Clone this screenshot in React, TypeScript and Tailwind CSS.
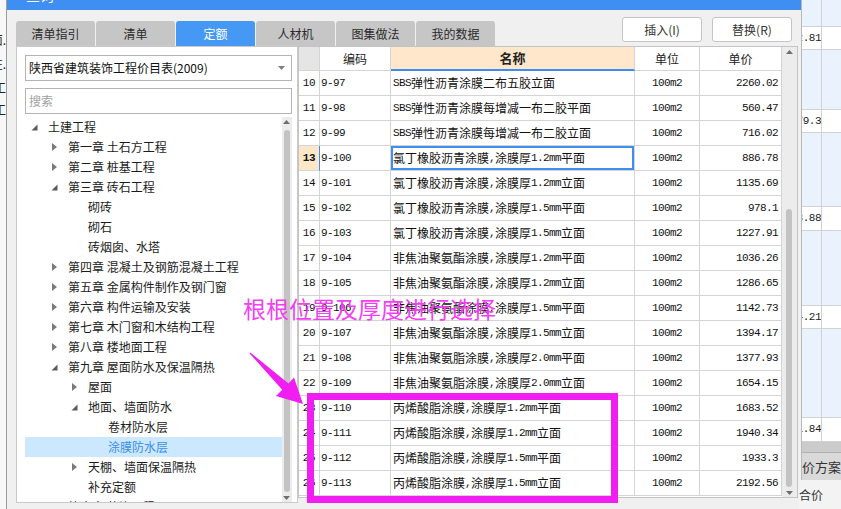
import React from 'react';

const cjk = "font-['Noto_Sans_CJK_SC','Noto_Sans',sans-serif]";
const mono = "font-['Liberation_Mono','Noto_Sans_CJK_SC',monospace]";

const rows = [
  ['10', '9-97', 'SBS弹性沥青涂膜二布五胶立面', '2260.02'],
  ['11', '9-98', 'SBS弹性沥青涂膜每增减一布二胶平面', '560.47'],
  ['12', '9-99', 'SBS弹性沥青涂膜每增减一布二胶立面', '716.02'],
  ['13', '9-100', '氯丁橡胶沥青涂膜,涂膜厚1.2mm平面', '886.78'],
  ['14', '9-101', '氯丁橡胶沥青涂膜,涂膜厚1.2mm立面', '1135.69'],
  ['15', '9-102', '氯丁橡胶沥青涂膜,涂膜厚1.5mm平面', '978.1'],
  ['16', '9-103', '氯丁橡胶沥青涂膜,涂膜厚1.5mm立面', '1227.91'],
  ['17', '9-104', '非焦油聚氨酯涂膜,涂膜厚1.2mm平面', '1036.26'],
  ['18', '9-105', '非焦油聚氨酯涂膜,涂膜厚1.2mm立面', '1286.65'],
  ['19', '9-106', '非焦油聚氨酯涂膜,涂膜厚1.5mm平面', '1142.73'],
  ['20', '9-107', '非焦油聚氨酯涂膜,涂膜厚1.5mm立面', '1394.17'],
  ['21', '9-108', '非焦油聚氨脂涂膜,涂膜厚2.0mm平面', '1377.93'],
  ['22', '9-109', '非焦油聚氨脂涂膜,涂膜厚2.0mm立面', '1654.15'],
  ['23', '9-110', '丙烯酸脂涂膜,涂膜厚1.2mm平面', '1683.52'],
  ['24', '9-111', '丙烯酸脂涂膜,涂膜厚1.2mm立面', '1940.34'],
  ['25', '9-112', '丙烯酸脂涂膜,涂膜厚1.5mm平面', '1933.3'],
  ['26', '9-113', '丙烯酸脂涂膜,涂膜厚1.5mm立面', '2192.56'],
];

type Node = { level: number; icon?: 'open' | 'closed'; text: string; selected?: boolean };

const tree: Node[] = [
  { level: 0, icon: 'open', text: '土建工程' },
  { level: 1, icon: 'closed', text: '第一章 土石方工程' },
  { level: 1, icon: 'closed', text: '第二章 桩基工程' },
  { level: 1, icon: 'open', text: '第三章 砖石工程' },
  { level: 2, text: '砌砖' },
  { level: 2, text: '砌石' },
  { level: 2, text: '砖烟囱、水塔' },
  { level: 1, icon: 'closed', text: '第四章 混凝土及钢筋混凝土工程' },
  { level: 1, icon: 'closed', text: '第五章 金属构件制作及钢门窗' },
  { level: 1, icon: 'closed', text: '第六章 构件运输及安装' },
  { level: 1, icon: 'closed', text: '第七章 木门窗和木结构工程' },
  { level: 1, icon: 'closed', text: '第八章 楼地面工程' },
  { level: 1, icon: 'open', text: '第九章 屋面防水及保温隔热' },
  { level: 2, icon: 'closed', text: '屋面' },
  { level: 2, icon: 'open', text: '地面、墙面防水' },
  { level: 3, text: '卷材防水层' },
  { level: 3, text: '涂膜防水层', selected: true },
  { level: 2, icon: 'closed', text: '天棚、墙面保温隔热' },
  { level: 2, text: '补充定额' },
  { level: 1, icon: 'closed', text: '第十章 装饰工程' },
];

const pad = ['pl-[6px]', 'pl-[26px]', 'pl-[46px]', 'pl-[66px]'];

const tabs = ['清单指引', '清单', '定额', '人材机', '图集做法', '我的数据'];

// ascii runs get the narrow mono face, the rest stays CJK
function Mixed({ text }: { text: string }) {
  const parts = text.split(/([\x20-\x7e]+)/).filter(Boolean);
  return (
    <>
      {parts.map((p, i) =>
        /^[\x20-\x7e]+$/.test(p) ? (
          <span key={i} className={`${mono} text-[11px] tracking-[-0.6px]`}>{p}</span>
        ) : (
          <span key={i}>{p}</span>
        )
      )}
    </>
  );
}

function TreeIcon({ kind }: { kind?: 'open' | 'closed' }) {
  if (kind === 'open') {
    return (
      <svg width="7" height="7" viewBox="0 0 7 7">
        <polygon points="6.5,0.5 6.5,6.5 0.5,6.5" fill="#5a5a5a" />
      </svg>
    );
  }
  if (kind === 'closed') {
    return (
      <svg width="5" height="8" viewBox="0 0 5 8" className="ml-[1px]">
        <polygon points="0,0 5,4 0,8" fill="#7a7a7a" />
      </svg>
    );
  }
  return null;
}

function Scrollbar({ thumbTop, thumbBottom, wide }: { thumbTop: string; thumbBottom: string; wide?: boolean }) {
  return (
    <div className={`${wide ? 'w-[15px]' : 'w-[10px]'} h-full bg-[#ececec] flex flex-col items-center`}>
      <svg width="7" height="4" viewBox="0 0 7 4" className="mt-[3px] shrink-0">
        <polygon points="0,4 3.5,0 7,4" fill="#6e6e6e" />
      </svg>
      <div className={`${thumbTop} w-[6px] flex-1 ${thumbBottom} rounded-[3px] bg-[#c3c3c3]`} />
      <svg width="7" height="4" viewBox="0 0 7 4" className="mb-[2px] shrink-0">
        <polygon points="0,0 3.5,4 7,0" fill="#6e6e6e" />
      </svg>
    </div>
  );
}

function BgCell({ h, white, value }: { h: string; white?: boolean; value?: string }) {
  return (
    <div className={`${h} flex border-b border-[#d2d2d2] ${white ? 'bg-white' : 'bg-[#eaf2fd]'}`}>
      <div className={`w-[20px] border-r border-[#d2d2d2] overflow-hidden flex justify-end items-center whitespace-nowrap ${mono} text-[11px] tracking-[-0.5px] text-[#222]`}>
        {value}
      </div>
      <div className="flex-1" />
    </div>
  );
}

export default function App() {
  return (
    <div className={`relative w-[841px] h-[509px] overflow-hidden flex bg-white ${cjk}`}>
      {/* background app, left edge */}
      <div className="w-[6px] h-full bg-[#f7f7f7] overflow-hidden flex flex-col text-[12px] text-[#222] leading-none">
        <div className="mt-[34px] h-[24px] flex justify-end whitespace-nowrap">立面.</div>
        <div className="h-[24px] flex justify-end whitespace-nowrap">立柱.</div>
        <div className="h-[22px] flex justify-end whitespace-nowrap">施工</div>
        <div className="h-[22px] flex justify-end whitespace-nowrap">施工</div>
      </div>
      <div className="w-px h-full bg-[#9c9c9c]" />

      {/* dialog */}
      <div className="w-[799px] h-full flex flex-col bg-[#f0f0f0] border-r border-[#b8b8b8]">
        <div className="h-[10px] bg-[#3f8ff3] overflow-hidden shrink-0">
          <div className="ml-[19px] -mt-[12px] text-[14px] leading-none text-white">查询</div>
        </div>

        <div className="h-[36px] shrink-0 flex justify-between pl-[9px] pr-[9px]">
          <div className="flex items-end gap-[1px]">
            {tabs.map((t) => (
              <div
                key={t}
                className={`w-[79px] h-[25px] rounded-t-[3px] flex items-center justify-center text-[12px] ${
                  t === '定额' ? 'bg-[#4598f3] text-white' : 'bg-[#c6c6c6] text-[#2a2a2a]'
                }`}
              >
                {t}
              </div>
            ))}
          </div>
          <div className="flex gap-[10px] mt-[7px]">
            <div className="w-[80px] h-[25px] bg-white border border-[#c4c4c4] rounded-[3px] flex items-center justify-center text-[12px] text-[#333]">插入(I)</div>
            <div className="w-[80px] h-[25px] bg-white border border-[#c4c4c4] rounded-[3px] flex items-center justify-center text-[12px] text-[#333]">替换(R)</div>
          </div>
        </div>

        <div className="flex pl-[9px]">
          {/* left tree panel */}
          <div className="w-[282px] h-[457px] bg-white border border-[#c9c9c9] flex flex-col">
            <div className="ml-[8px] mr-[5px] mt-[8px] h-[26px] border border-[#b4b4b4] flex items-center justify-between pl-[3px] pr-[6px]">
              <span className="text-[12px] text-[#111]">陕西省建筑装饰工程价目表(2009)</span>
              <svg width="7" height="4" viewBox="0 0 7 4">
                <polygon points="0,0 7,0 3.5,4" fill="#808080" />
              </svg>
            </div>
            <div className="ml-[8px] mr-[5px] mt-[7px] h-[26px] border border-[#b4b4b4] flex items-center pl-[3px]">
              <span className="text-[12px] text-[#a2a2a2]">搜索</span>
            </div>
            <div className="mt-[3px] flex-1 min-h-0 flex ml-[8px] mr-[5px]">
              <div className="w-[257px] h-full overflow-hidden">
                {tree.map((n, i) => (
                  <div
                    key={i}
                    className={`h-[20px] flex items-center ${pad[n.level]} text-[12px] ${
                      n.selected ? 'bg-[#cce8ff] text-[#3b8ee8]' : 'text-[#1c1c1c]'
                    }`}
                  >
                    <span className="w-[17px] flex items-center">
                      <TreeIcon kind={n.icon} />
                    </span>
                    <span className="whitespace-nowrap">{n.text}</span>
                  </div>
                ))}
              </div>
              <Scrollbar thumbTop="mt-[6px]" thumbBottom="mb-[4px]" />
            </div>
          </div>

          {/* result table */}
          <div className="w-[500px] h-[452px] bg-white border border-[#c4c4c4] flex">
            <div className="w-[483px] flex flex-col">
              <div className="h-[24px] flex text-[12px] text-[#222]">
                <div className="w-[21px] bg-[#e5e5e5] border-r border-b border-[#d4d4d4]" />
                <div className="w-[71px] border-r border-b border-[#d4d4d4] flex items-center justify-center">编码</div>
                <div className="w-[244px] bg-[#fee7ca] border-r border-[#d4d4d4] border-b-2 border-b-[#3d8ef0] flex items-center justify-center text-[13px] font-bold">名称</div>
                <div className="w-[65px] border-r border-b border-[#d4d4d4] flex items-center justify-center">单位</div>
                <div className="w-[82px] border-r border-b border-[#d4d4d4] flex items-center justify-center">单价</div>
              </div>
              {rows.map(([no, code, name, price]) => {
                const sel = no === '13';
                return (
                  <div key={no} className="h-[25px] flex text-[12px] text-[#111]">
                    <div
                      className={`w-[21px] border-b border-r flex items-center justify-center ${mono} text-[11px] tracking-[-0.5px] ${
                        sel ? 'bg-[#fee6c8] font-bold border-b-[#d4d4d4] border-r-[#3d8ef0]' : 'border-[#d4d4d4]'
                      }`}
                    >
                      {no}
                    </div>
                    <div className={`w-[71px] border-r border-b border-[#d4d4d4] flex items-center pl-[1px] ${mono} text-[11px] tracking-[-0.6px]`}>
                      {code}
                    </div>
                    <div
                      className={`w-[244px] border-r border-b border-[#d4d4d4] flex items-center pl-[2px] whitespace-nowrap overflow-hidden ${
                        sel ? 'shadow-[inset_0_0_0_2px_#3d8ef0]' : ''
                      }`}
                    >
                      <Mixed text={name} />
                    </div>
                    <div className={`w-[65px] border-r border-b border-[#d4d4d4] flex items-center justify-center ${mono} text-[11px] tracking-[-0.6px]`}>
                      100m2
                    </div>
                    <div className={`w-[82px] border-r border-b border-[#d4d4d4] flex items-center justify-end pr-[3px] ${mono} text-[11px] tracking-[-0.6px]`}>
                      {price}
                    </div>
                  </div>
                );
              })}
            </div>
            <div className="w-[15px] h-full">
              <Scrollbar thumbTop="mt-[155px]" thumbBottom="mb-[4px]" wide />
            </div>
          </div>
        </div>
      </div>

      {/* background app, right edge */}
      <div className="flex-1 h-full flex flex-col">
        <BgCell h="h-[27px]" />
        <BgCell h="h-[23px]" white value="2.81" />
        <BgCell h="h-[60px]" />
        <BgCell h="h-[23px]" white value="79.3" />
        <BgCell h="h-[74px]" />
        <BgCell h="h-[24px]" white value="3.88" />
        <BgCell h="h-[75px]" />
        <BgCell h="h-[23px]" white value="4.21" />
        <BgCell h="h-[89px]" />
        <BgCell h="h-[24px]" white value="1.84" />
        <div className="h-[11px] bg-[#cbcbcb] border-b border-[#b0b0b0]" />
        <div className="h-[27px] bg-[#d9d9d9] flex items-center whitespace-nowrap text-[13px] text-[#333]">价方案</div>
        <div className="flex-1 bg-[#f3f3f3] flex items-center whitespace-nowrap text-[12px] text-[#333] -ml-[3px]">合价</div>
      </div>

      {/* annotation overlay */}
      <div className="absolute left-[243px] top-[297px] text-[23px] leading-none text-[#f43ef4] whitespace-nowrap">
        根根位置及厚度进行选择
      </div>
      <div className="absolute left-[307px] top-[393px] w-[311px] h-[110px] border-[7px] border-[#f01ef0]" />
      <svg className="absolute left-0 top-0 pointer-events-none" width="841" height="509" viewBox="0 0 841 509">
        <polygon
          points="249.6,353.4 250.4,352.6 288.5,383.5 294,377.4 303,404 276,396 282.2,389.8"
          fill="#f01ef0"
        />
      </svg>
    </div>
  );
}
